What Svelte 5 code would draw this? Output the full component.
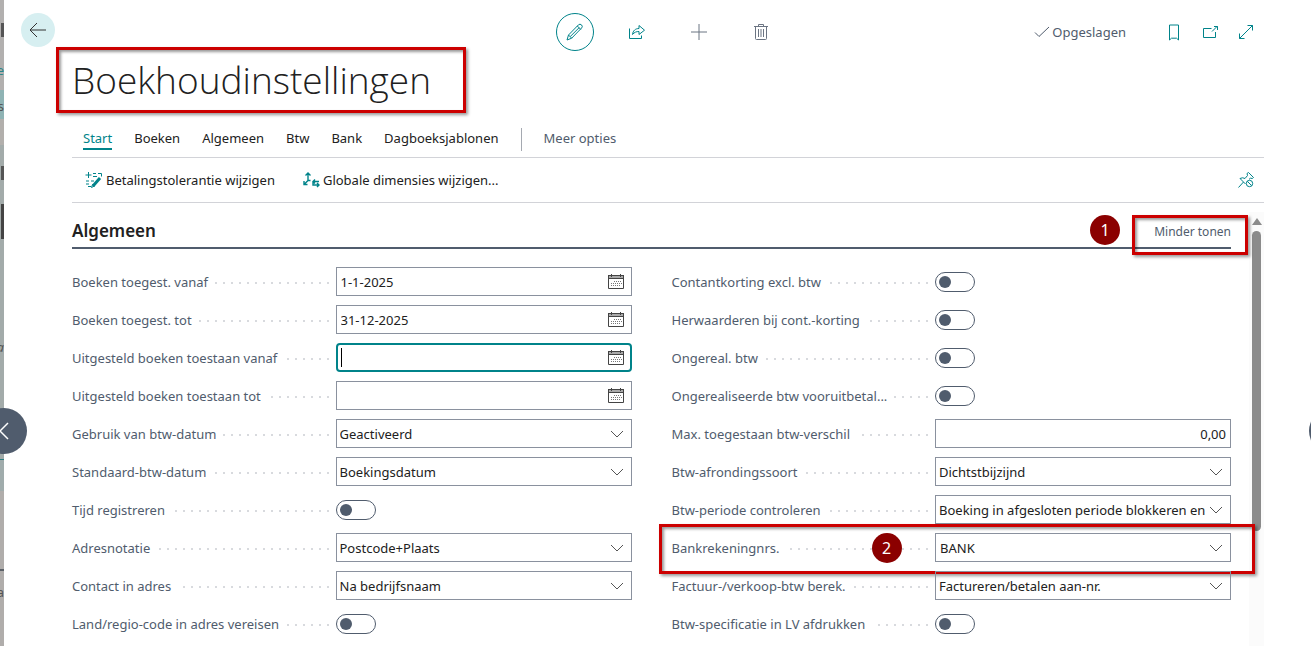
<script lang="ts">
  type Field = {
    id: string;
    label: string;
    kind: "date" | "select" | "toggle" | "number" | "lookup";
    value?: string;
    focused?: boolean;
    marked?: boolean;
  };

  const tabs = ["Start", "Boeken", "Algemeen", "Btw", "Bank", "Dagboeksjablonen"];
  let activeTab = $state("Start");

  let columns = $state<Field[][]>([
    [
      { id: "posting-from", label: "Boeken toegest. vanaf", kind: "date", value: "1-1-2025" },
      { id: "posting-to", label: "Boeken toegest. tot", kind: "date", value: "31-12-2025" },
      { id: "deferral-from", label: "Uitgesteld boeken toestaan vanaf", kind: "date", value: "", focused: true },
      { id: "deferral-to", label: "Uitgesteld boeken toestaan tot", kind: "date", value: "" },
      { id: "vat-date-usage", label: "Gebruik van btw-datum", kind: "select", value: "Geactiveerd" },
      { id: "vat-date-default", label: "Standaard-btw-datum", kind: "select", value: "Boekingsdatum" },
      { id: "register-time", label: "Tijd registreren", kind: "toggle" },
      { id: "address-format", label: "Adresnotatie", kind: "select", value: "Postcode+Plaats" },
      { id: "contact-address", label: "Contact in adres", kind: "select", value: "Na bedrijfsnaam" },
      { id: "country-required", label: "Land/regio-code in adres vereisen", kind: "toggle" },
    ],
    [
      { id: "discount-excl", label: "Contantkorting excl. btw", kind: "toggle" },
      { id: "adjust-discount", label: "Herwaarderen bij cont.-korting", kind: "toggle" },
      { id: "unrealized-vat", label: "Ongereal. btw", kind: "toggle" },
      { id: "prepayment-vat", label: "Ongerealiseerde btw vooruitbetal...", kind: "toggle" },
      { id: "max-vat-diff", label: "Max. toegestaan btw-verschil", kind: "number", value: "0,00" },
      { id: "vat-rounding", label: "Btw-afrondingssoort", kind: "select", value: "Dichtstbijzijnd" },
      { id: "vat-period", label: "Btw-periode controleren", kind: "select", value: "Boeking in afgesloten periode blokkeren en" },
      { id: "bank-nos", label: "Bankrekeningnrs.", kind: "lookup", value: "BANK", marked: true },
      { id: "bill-to-vat", label: "Factuur-/verkoop-btw berek.", kind: "select", value: "Factureren/betalen aan-nr." },
      { id: "vat-spec", label: "Btw-specificatie in LV afdrukken", kind: "toggle" },
    ],
  ]);
</script>

{#snippet chevron()}
  <svg class="chevron" width="14" height="8" viewBox="0 0 14 8" aria-hidden="true">
    <path d="M1 1l6 6 6-6" />
  </svg>
{/snippet}

<div class="shell">
  <div class="backdrop" aria-hidden="true">
    <span class="fragment teal">e</span>
    <span class="fragment row">s</span>
    <span class="fragment italic">a</span>
    <span class="fragment low">a</span>
  </div>

  <main class="page">
    <header class="topbar">
      <button class="back" aria-label="Terug">
        <svg width="18" height="16" viewBox="0 0 18 16"><path d="M17 8H2M8 1L1 8l7 7" /></svg>
      </button>
      <div class="record-actions">
        <button class="icon edit" aria-label="Bewerken">
          <svg width="18" height="18" viewBox="0 0 18 18">
            <path d="M1 17l1.500-5L12.500 1.800q1.500-1.300 3 .1t.2 3L5.700 15.200zM2.500 12l3.200 3.200M11.300 3l3.500 3.500M4.200 13.600l8.900-8.900" />
          </svg>
        </button>
        <button class="icon" aria-label="Delen">
          <svg width="18" height="16" viewBox="0 0 18 16">
            <path d="M1.500 4.500v10h12v-3M4.500 10.500C5 6.500 7.500 4.500 11 4.500v-3l5.500 4.700L11 10.500v-3c-2.500 0-4.500.6-6.500 3z" />
          </svg>
        </button>
        <button class="icon gray" aria-label="Nieuw">
          <svg width="18" height="18" viewBox="0 0 18 18"><path d="M9 1v16M1 9h16" /></svg>
        </button>
        <button class="icon gray" aria-label="Verwijderen">
          <svg width="14" height="18" viewBox="0 0 14 18">
            <path d="M0 3.500h14M4.500 3V1.500h5V3M1.500 4v11.500q0 1 1 1h9q1 0 1-1V4M4.500 6v8M7 6v8M9.500 6v8" />
          </svg>
        </button>
      </div>
      <div class="page-actions">
        <span class="saved">
          <svg width="16" height="12" viewBox="0 0 16 12"><path d="M1 6.500l4 4L15 1" /></svg>
          Opgeslagen
        </span>
        <button class="icon" aria-label="Bladwijzer">
          <svg width="12" height="17" viewBox="0 0 12 17"><path d="M1.500 1h9v15L8.500 14.200h-5L1.500 16z" /></svg>
        </button>
        <button class="icon" aria-label="Openen in nieuw venster">
          <svg width="17" height="14" viewBox="0 0 17 14">
            <path d="M9.500 3.500h-8v9h12V7M10 6.500L15.500 1M12 1.500h3.500V5" />
          </svg>
        </button>
        <button class="icon" aria-label="Vergroten">
          <svg width="16" height="16" viewBox="0 0 16 16"><path d="M1.500 14.500l13-13M9.500 1.500h5v5M1.500 9.500v5h5" /></svg>
        </button>
      </div>
    </header>

    <div class="content">
      <h1><span class="marked title-mark">Boekhoudinstellingen</span></h1>

      <nav class="tabs">
        {#each tabs as tab}
          <button class="tab" class:active={tab === activeTab} onclick={() => (activeTab = tab)}>{tab}</button>
        {/each}
        <span class="divider"></span>
        <button class="tab more">Meer opties</button>
      </nav>

      <div class="actionbar">
        <button class="action">
          <svg width="18" height="16" viewBox="0 0 18 16">
            <path d="M3.500 0v6M.5 3h6M8 1.500h3M13 1.500h3.500v3M8 4.500h4M1 9h3M1 12h3M3 14.500h3M6 9h3" />
            <path class="bold" d="M8 14l7-8" />
            <path d="M6.500 15.500l1-3 2 1.500z" />
          </svg>
          Betalingstolerantie wijzigen
        </button>
        <button class="action">
          <svg class="axes" width="17" height="16" viewBox="0 0 17 16">
            <path d="M5 8.500V1M2.500 3.500L5 1l2.500 2.500M5 8.500L1 12.500M1 9v3.500h3.500M5 8.500h2.500M16 9.500H10M12 7.500l-2 2 2 2M10 9.500v3.500h6M14 11l2 2-2 2" />
          </svg>
          Globale dimensies wijzigen...
        </button>
        <button class="pin" aria-label="Losmaken">
          <svg width="16" height="16" viewBox="0 0 16 16">
            <path d="M.5 15.500L5.500 10M2 6.500l5.500 5.500M2 6.500q2.500-1.500 5 0L9.500 3.500 9 1.500 10.500.5l5 5-1.200 1-2-.3-1.300 1.200" />
            <circle cx="11.500" cy="11.500" r="3.200" />
            <path d="M9.300 9.300l4.400 4.400" />
          </svg>
        </button>
      </div>

      <div class="scrollarea">
        <section>
          <div class="section-head">
            <h2>Algemeen</h2>
            <span class="step step-one">1</span>
            <button class="less"><span class="marked less-mark">Minder tonen</span></button>
          </div>

          <div class="columns">
            {#each columns as fields}
              <div class="column">
                {#each fields as field}
                  <div class="field" class:marked={field.marked} class:row-mark={field.marked}>
                    <label for={field.id}>{field.label}</label>
                    {#if field.marked}<span class="step step-two">2</span>{/if}
                    <div class="control">
                      {#if field.kind === "toggle"}
                        <input class="toggle" id={field.id} type="checkbox" role="switch" />
                      {:else if field.kind === "select"}
                        <select class="box" id={field.id} value={field.value}>
                          <option>{field.value}</option>
                        </select>
                        {@render chevron()}
                      {:else}
                        <input
                          class="box {field.kind}"
                          class:focused={field.focused}
                          id={field.id}
                          type="text"
                          bind:value={field.value}
                        />
                        {#if field.focused}<span class="caret"></span>{/if}
                        {#if field.kind === "date"}
                          <button class="calendar" aria-label="Datum kiezen">
                            <svg width="16" height="15" viewBox="0 0 16 15">
                              <path class="head" d="M1 3h14" />
                              <path d="M.5 2v12.500h15V2M0 1.500h16M0 4.500h16M3.500 0v3M12.500 0v3" />
                              <path class="days" d="M6 7.500h8M3 9.500h11M3 11.500h9" />
                            </svg>
                          </button>
                        {:else if field.kind === "lookup"}
                          {@render chevron()}
                        {/if}
                      {/if}
                    </div>
                  </div>
                {/each}
              </div>
            {/each}
          </div>
        </section>
        <div class="scrollbar">
          <span class="arrow"></span>
          <span class="thumb"></span>
        </div>
      </div>
    </div>
  </main>

  <button class="step-nav previous" aria-label="Vorige">
    <svg width="10" height="18" viewBox="0 0 10 18"><path d="M9 1L1 9l8 8" /></svg>
  </button>
  <button class="step-nav next" aria-label="Volgende"></button>
</div>

<style>
  :global(body) {
    --teal: #00838a;
    --slate: #505c6d;
    --ink: #212121;
    --line: #d2d3d8;
    --mark: #cc0000;
    background: #fff;
    color: var(--ink);
    font-family: "Segoe UI", "Noto Sans", "Open Sans", sans-serif;
    font-size: 13px;
    line-height: 20px;
    overflow: hidden;
  }

  button,
  input,
  select {
    font: inherit;
    color: inherit;
    margin: 0;
    padding: 0;
    border: 0;
    background: none;
  }

  svg {
    display: block;
    fill: none;
    stroke: currentColor;
    stroke-width: 1;
  }

  .shell {
    position: relative;
    display: flex;
    height: 100vh;
    overflow: hidden;
  }

  /* Strip of the page underneath */
  .backdrop {
    position: relative;
    flex: 0 0 4px;
    overflow: hidden;
    background:
      linear-gradient(
          transparent 23px,
          #555 23px 37px,
          transparent 37px 166px,
          #555 166px 180px,
          transparent 180px 204px,
          #444 204px 239px,
          transparent 239px
        )
        right / 3px 100% no-repeat,
      linear-gradient(
        #b2b0af 0 90px,
        #8fb3b4 90px 119px,
        #b2afac 119px 145px,
        #a3abaa 145px 459px,
        #2b7d80 459px 460px,
        #a0acac 460px 491px,
        #b0adab 491px 569px,
        #5c6168 569px 571px,
        #b0adab 571px
      );
  }

  .fragment {
    position: absolute;
    right: 0;
    color: #555;
  }

  .teal {
    top: 60px;
    color: #2b8588;
  }

  .row {
    top: 96px;
  }

  .italic {
    top: 337px;
    font-style: italic;
  }

  .low {
    top: 582px;
  }

  .page {
    flex: 1;
    min-width: 0;
    display: flex;
    flex-direction: column;
  }

  /* Top bar */
  .topbar {
    display: grid;
    grid-template-columns: 1fr auto 1fr;
    align-items: center;
    padding: 13px 47px 0 17px;
    height: 38px;
  }

  .back {
    display: grid;
    place-items: center;
    width: 34px;
    height: 34px;
    border-radius: 50%;
    background: #d7eff1;
    align-self: start;
    color: #333;
  }

  .record-actions,
  .page-actions {
    display: flex;
    align-items: center;
  }

  .record-actions {
    gap: 24px;
    margin-left: 50px;
  }

  .page-actions {
    justify-content: flex-end;
  }

  .icon {
    display: grid;
    place-items: center;
    width: 38px;
    height: 38px;
    color: var(--teal);
  }

  .page-actions .icon {
    width: 36px;
  }

  .edit {
    border: 1px solid var(--teal);
    border-radius: 50%;
  }

  .gray {
    color: #6b7482;
  }

  .saved {
    display: flex;
    align-items: center;
    gap: 2px;
    margin-right: 30px;
    color: var(--slate);
  }

  /* Title, tabs and actions */
  .content {
    flex: 1;
    min-height: 0;
    display: flex;
    flex-direction: column;
    padding: 0 47px 0 68px;
  }

  h1 {
    margin: 0;
    font-family: "Segoe UI", "Open Sans", sans-serif;
    font-size: 37px;
    font-weight: 300;
    line-height: 58px;
  }

  .marked {
    position: relative;
  }

  .marked::after {
    content: "";
    position: absolute;
    border: 3px solid var(--mark);
    box-shadow:
      2px 2px 3px rgba(0, 0, 0, 0.4),
      inset 2px 2px 3px rgba(0, 0, 0, 0.4);
    pointer-events: none;
  }

  .title-mark::after {
    inset: -7px -35px -8px -16px;
  }

  .tabs {
    display: flex;
    align-items: center;
    gap: 22px;
    padding: 12px 11px 0;
    height: 36px;
    border-bottom: 1px solid var(--line);
  }

  .tab {
    border-bottom: 2px solid transparent;
  }

  .tab.active {
    color: var(--teal);
    border-color: var(--teal);
  }

  .tab.more {
    color: var(--slate);
  }

  .divider {
    width: 1px;
    height: 23px;
    background: #a5a9b1;
  }

  .actionbar {
    display: flex;
    align-items: center;
    gap: 28px;
    padding: 0 10px 0 13px;
    height: 44px;
    border-bottom: 1px solid var(--line);
  }

  .action {
    display: flex;
    align-items: center;
    gap: 3px;
  }

  .action svg,
  .pin svg {
    color: var(--teal);
  }

  .action .bold {
    stroke-width: 3;
  }

  .axes {
    stroke-width: 1.4;
  }

  .pin {
    margin-left: auto;
  }

  /* Scrolling part */
  .scrollarea {
    flex: 1;
    min-height: 0;
    display: flex;
    gap: 18px;
  }

  section {
    flex: 1;
    min-width: 0;
  }

  .section-head {
    display: flex;
    align-items: center;
    margin-top: 9px;
    height: 35px;
    border-bottom: 2px solid var(--slate);
  }

  h2 {
    flex: 1;
    margin: 0;
    padding-top: 2px;
    font-size: 17px;
    font-weight: 600;
  }

  .less {
    padding-top: 4px;
    color: var(--slate);
    font-size: 12px;
  }

  .less-mark::after {
    inset: -8px -17px -15px -22px;
  }

  .step {
    position: relative;
    z-index: 1;
    width: 30px;
    height: 30px;
    border-radius: 50%;
    background: #8b0000;
    color: #fff;
    font-size: 16px;
    line-height: 30px;
    text-align: center;
  }

  .step-one {
    margin-right: 34px;
  }

  .columns {
    display: grid;
    grid-template-columns: 1fr 1fr;
    gap: 40px;
    margin-top: 18px;
  }

  .column {
    display: grid;
    align-content: start;
    gap: 9px;
  }

  .field {
    display: flex;
    align-items: center;
    height: 29px;
  }

  .row-mark::after {
    inset: -9px -24px -12px -13px;
  }

  /* Dotted leader runs from the label text to the control */
  label {
    flex: 1;
    display: flex;
    align-items: center;
    gap: 7px;
    color: var(--slate);
    white-space: nowrap;
  }

  label::after {
    content: "";
    flex: 1;
    height: 2px;
    margin: 2px 7px 0 0;
    background: repeating-linear-gradient(to left, #d8dade 0 2px, transparent 2px 8px);
  }

  .step-two {
    position: absolute;
    left: 200px;
  }

  .control {
    position: relative;
    display: flex;
    align-items: center;
    flex: 0 0 53%;
    max-width: 296px;
    height: 29px;
  }

  .box {
    width: 100%;
    height: 29px;
    box-sizing: border-box;
    padding: 0 4px;
    border: 1px solid #8a919e;
    border-radius: 0;
    appearance: none;
    outline: 0;
  }

  select.box {
    padding: 0 20px 0 3px;
    overflow: hidden;
  }

  .box.number {
    text-align: right;
  }

  .box.focused {
    border: 2px solid var(--teal);
    border-radius: 4px;
  }

  .caret {
    position: absolute;
    left: 5px;
    width: 1px;
    height: 19px;
    background: #000;
  }

  .chevron {
    position: absolute;
    right: 8px;
    color: #555;
    pointer-events: none;
  }

  .calendar {
    position: absolute;
    right: 8px;
    color: #444;
  }

  .calendar .head {
    stroke: #aaa;
    stroke-width: 2;
  }

  .calendar .days {
    stroke: #777;
    stroke-dasharray: 1 1;
  }

  .toggle {
    appearance: none;
    display: flex;
    align-items: center;
    width: 40px;
    height: 20px;
    box-sizing: border-box;
    padding: 0 3px;
    border: 1px solid var(--slate);
    border-radius: 10px;
  }

  .toggle::before {
    content: "";
    width: 12px;
    height: 12px;
    border-radius: 50%;
    background: var(--slate);
  }

  .toggle:checked::before {
    margin-left: auto;
  }

  .scrollbar {
    flex: 0 0 15px;
    display: flex;
    flex-direction: column;
    align-items: center;
    gap: 6px;
    margin-top: 9px;
    padding-top: 6px;
    background: #fbfbfb;
  }

  .arrow {
    border: 5px solid transparent;
    border-top: 0;
    border-bottom: 7px solid #8b8b8b;
  }

  .thumb {
    width: 9px;
    height: 70%;
    border-radius: 5px;
    background: #8b8b8b;
  }

  /* Previous / next record */
  .step-nav {
    position: absolute;
    top: 408px;
    display: grid;
    place-items: center;
    width: 46px;
    height: 46px;
    border-radius: 50%;
    background: var(--slate);
    color: #fff;
  }

  .step-nav svg {
    stroke-width: 1.5;
  }

  .previous {
    left: -19px;
  }

  .next {
    right: -44px;
  }
</style>
